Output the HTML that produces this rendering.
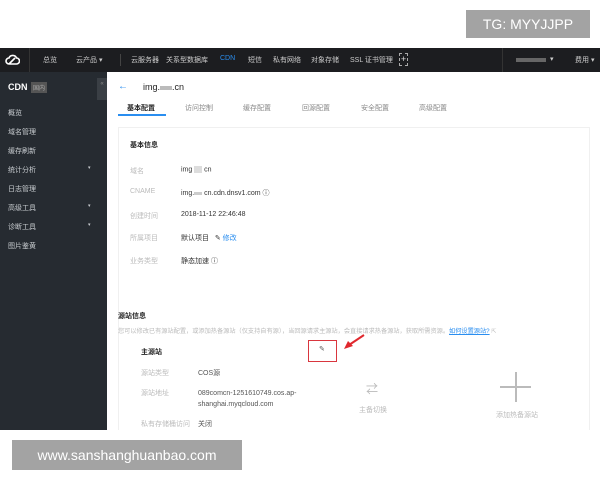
<!DOCTYPE html>
<html><head><meta charset="utf-8"><style>
*{margin:0;padding:0;box-sizing:border-box}
body{width:600px;height:480px;background:#fff;position:relative;overflow:hidden;font-family:"Liberation Sans","Noto Sans CJK SC",sans-serif;font-size:7px;color:#333}
.a{position:absolute;white-space:nowrap}
.nav{position:absolute;left:0;top:48px;width:600px;height:24px;background:#1c1d20}
.nav .a{color:#ccc;top:7px;font-size:7px}
.side{position:absolute;left:0;top:72px;width:107px;height:358px;background:#262b31}
.side .a{color:#c8ccd0;font-size:7px;left:8px}
.lbl{color:#bbb}
.blue{color:#2a8ef0}
</style></head><body>
<div class="a" style="left:466px;top:10px;width:124px;height:28px;background:#a3a3a3;color:#fff;font-size:14px;line-height:28px;text-align:center">TG: MYYJJPP</div>

<div class="nav">
<svg class="a" style="left:5px;top:5px" width="15" height="14" viewBox="0 0 15 14"><path d="M4 11a3 3 0 0 1 0-6a4 4 0 0 1 7.5 0a3 3 0 0 1 0 6z M4 11 L10 5" fill="none" stroke="#fff" stroke-width="1.6"/></svg>
<div class="a" style="left:29px;top:0;width:1px;height:24px;background:#333"></div>
<div class="a" style="left:43px">总览</div>
<div class="a" style="left:76px">云产品 ▾</div>
<div class="a" style="left:120px;top:6px;width:1px;height:12px;background:#444"></div>
<div class="a" style="left:131px">云服务器</div>
<div class="a" style="left:166px">关系型数据库</div>
<div class="a" style="left:220px;color:#2a8ef0">CDN</div>
<div class="a" style="left:248px">短信</div>
<div class="a" style="left:273px">私有网络</div>
<div class="a" style="left:311px">对象存储</div>
<div class="a" style="left:350px">SSL 证书管理</div>
<div class="a" style="left:399px;top:5px;width:9px;height:13px;border:1px dashed #aaa;color:#ddd;text-align:center;line-height:11px;font-size:9px">+</div>
<div class="a" style="left:502px;top:0;width:1px;height:24px;background:#333"></div>
<div class="a" style="left:516px;top:10px;width:30px;height:4px;background:#666"></div>
<div class="a" style="left:550px">▾</div>
<div class="a" style="left:575px">费用 ▾</div>
</div>

<div class="side">
<div class="a" style="top:10px;color:#fff;font-weight:bold;font-size:9px">CDN</div>
<div class="a" style="left:31px;top:10px;background:#555;color:#aaa;font-size:6px;padding:1px 2px">国内</div>
<div class="a" style="left:97px;top:6px;width:10px;height:22px;background:#3a3f45;color:#888;font-size:6px;text-align:center;line-height:12px">«</div>
<div class="a" style="top:36px">概览</div>
<div class="a" style="top:55px">域名管理</div>
<div class="a" style="top:74px">缓存刷新</div>
<div class="a" style="top:93px">统计分析</div><div class="a" style="left:88px;top:93px;font-size:5px">▾</div>
<div class="a" style="top:112px">日志管理</div>
<div class="a" style="top:131px">高级工具</div><div class="a" style="left:88px;top:131px;font-size:5px">▾</div>
<div class="a" style="top:150px">诊断工具</div><div class="a" style="left:88px;top:150px;font-size:5px">▾</div>
<div class="a" style="top:169px">图片鉴黄</div>
</div>

<div class="a blue" style="left:118px;top:81px;font-size:10px">←</div>
<div class="a" style="left:143px;top:82px;font-size:9px;color:#222">img.<span style="display:inline-block;width:12px;height:4px;background:#bbb;vertical-align:middle"></span>.cn</div>
<div class="a" style="left:127px;top:103px;font-weight:bold;color:#222">基本配置</div>
<div class="a" style="left:118px;top:114px;width:48px;height:1.5px;background:#2a8ef0"></div>
<div class="a" style="left:185px;top:103px;color:#888">访问控制</div>
<div class="a" style="left:243px;top:103px;color:#888">缓存配置</div>
<div class="a" style="left:302px;top:103px;color:#888">回源配置</div>
<div class="a" style="left:361px;top:103px;color:#888">安全配置</div>
<div class="a" style="left:419px;top:103px;color:#888">高级配置</div>

<div class="a" style="left:118px;top:127px;width:472px;height:303px;border:1px solid #f0f0f0;border-bottom:none"></div>
<div class="a" style="left:130px;top:140px;font-weight:bold;color:#222">基本信息</div>
<div class="a lbl" style="left:130px;top:166px">域名</div><div class="a" style="left:181px;top:166px">img <span style="display:inline-block;width:8px;height:7px;background:#ddd;vertical-align:middle"></span> cn</div>
<div class="a lbl" style="left:130px;top:188px">CNAME</div><div class="a" style="left:181px;top:188px">img.<span style="display:inline-block;width:8px;height:3px;background:#ccc;vertical-align:middle"></span> cn.cdn.dnsv1.com ⓘ</div>
<div class="a lbl" style="left:130px;top:211px">创建时间</div><div class="a" style="left:181px;top:211px">2018-11-12 22:46:48</div>
<div class="a lbl" style="left:130px;top:233px">所属项目</div><div class="a" style="left:181px;top:233px">默认项目 &nbsp; ✎ <span class="blue">修改</span></div>
<div class="a lbl" style="left:130px;top:256px">业务类型</div><div class="a" style="left:181px;top:256px">静态加速 ⓘ</div>

<div class="a" style="left:118px;top:311px;font-weight:bold;color:#222">源站信息</div>
<div class="a lbl" style="left:118px;top:326px;font-size:6.2px">您可以修改已有源站配置，或添加热备源站（仅支持自有源），当回源请求主源站，会直接请求热备源站，获取所需资源。<span class="blue" style="text-decoration:underline">如何设置源站?</span> ⇱</div>
<div class="a" style="left:141px;top:347px;font-weight:bold;color:#222">主源站</div>
<div class="a" style="left:308px;top:340px;width:29px;height:22px;border:1.5px solid #d9363e"></div>
<div class="a" style="left:319px;top:345px;color:#555">✎</div>
<svg class="a" style="left:342px;top:334px" width="24" height="16" viewBox="0 0 24 16"><path d="M22 1 L7 11" stroke="#e0282e" stroke-width="2"/><path d="M2 15 L6 7 L11 12 z" fill="#e0282e"/></svg>
<div class="a lbl" style="left:141px;top:368px">源站类型</div><div class="a" style="left:198px;top:368px;color:#555">COS源</div>
<div class="a lbl" style="left:141px;top:388px">源站地址</div><div class="a" style="left:198px;top:388px;color:#555;line-height:11px">089comcn-1251610749.cos.ap-<br>shanghai.myqcloud.com</div>
<div class="a lbl" style="left:141px;top:419px">私有存储桶访问</div><div class="a" style="left:198px;top:419px;color:#555">关闭</div>
<div class="a" style="left:366px;top:380px;color:#bbb;font-size:12px">⇄</div>
<div class="a lbl" style="left:359px;top:405px">主备切换</div>
<div class="a" style="left:500px;top:386px;width:31px;height:1.5px;background:#bbb"></div>
<div class="a" style="left:515px;top:372px;width:1.5px;height:30px;background:#bbb"></div>
<div class="a lbl" style="left:496px;top:410px">添加热备源站</div>

<div class="a" style="left:12px;top:440px;width:230px;height:30px;background:#a3a3a3;color:#fff;font-size:14px;line-height:30px;text-align:center">www.sanshanghuanbao.com</div>
</body></html>
